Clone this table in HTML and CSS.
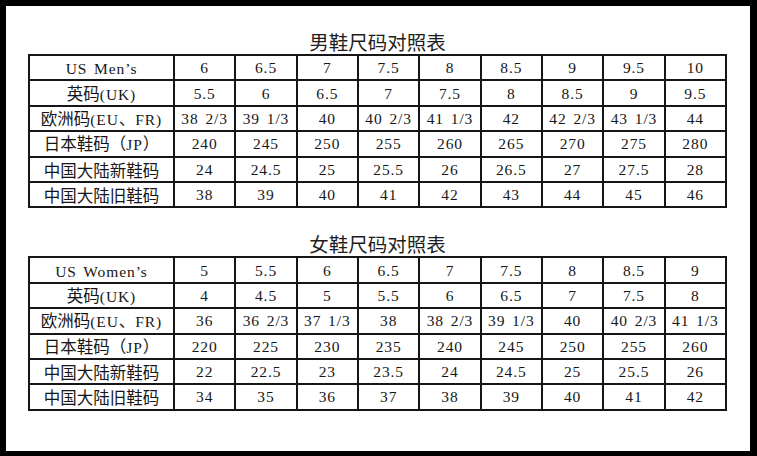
FILE: index.html
```html
<!DOCTYPE html>
<html lang="zh-CN">
<head>
<meta charset="utf-8">
<title>鞋码对照表</title>
<link rel="stylesheet" href="styles.css">
</head>
<body>
<main class="sheet">
  <section class="chart">
    <h2 class="title">男鞋尺码对照表</h2>
    <table class="sizes">
      <colgroup><col class="c-label"><col span="9"></colgroup>
      <tbody>
        <tr><th><span class="l">US Men’s</span></th><td>6</td><td>6.5</td><td>7</td><td>7.5</td><td>8</td><td>8.5</td><td>9</td><td>9.5</td><td>10</td></tr>
        <tr><th>英码<span class="l">(UK)</span></th><td>5.5</td><td>6</td><td>6.5</td><td>7</td><td>7.5</td><td>8</td><td>8.5</td><td>9</td><td>9.5</td></tr>
        <tr><th>欧洲码<span class="l">(EU</span>、<span class="l">FR)</span></th><td>38 2/3</td><td>39 1/3</td><td>40</td><td>40 2/3</td><td>41 1/3</td><td>42</td><td>42 2/3</td><td>43 1/3</td><td>44</td></tr>
        <tr><th>日本鞋码（<span class="l">JP</span>）</th><td>240</td><td>245</td><td>250</td><td>255</td><td>260</td><td>265</td><td>270</td><td>275</td><td>280</td></tr>
        <tr><th>中国大陆新鞋码</th><td>24</td><td>24.5</td><td>25</td><td>25.5</td><td>26</td><td>26.5</td><td>27</td><td>27.5</td><td>28</td></tr>
        <tr><th>中国大陆旧鞋码</th><td>38</td><td>39</td><td>40</td><td>41</td><td>42</td><td>43</td><td>44</td><td>45</td><td>46</td></tr>
      </tbody>
    </table>
  </section>
  <section class="chart women">
    <h2 class="title">女鞋尺码对照表</h2>
    <table class="sizes">
      <colgroup><col class="c-label"><col span="9"></colgroup>
      <tbody>
        <tr><th><span class="l">US Women’s</span></th><td>5</td><td>5.5</td><td>6</td><td>6.5</td><td>7</td><td>7.5</td><td>8</td><td>8.5</td><td>9</td></tr>
        <tr><th>英码<span class="l">(UK)</span></th><td>4</td><td>4.5</td><td>5</td><td>5.5</td><td>6</td><td>6.5</td><td>7</td><td>7.5</td><td>8</td></tr>
        <tr><th>欧洲码<span class="l">(EU</span>、<span class="l">FR)</span></th><td>36</td><td>36 2/3</td><td>37 1/3</td><td>38</td><td>38 2/3</td><td>39 1/3</td><td>40</td><td>40 2/3</td><td>41 1/3</td></tr>
        <tr><th>日本鞋码（<span class="l">JP</span>）</th><td>220</td><td>225</td><td>230</td><td>235</td><td>240</td><td>245</td><td>250</td><td>255</td><td>260</td></tr>
        <tr><th>中国大陆新鞋码</th><td>22</td><td>22.5</td><td>23</td><td>23.5</td><td>24</td><td>24.5</td><td>25</td><td>25.5</td><td>26</td></tr>
        <tr><th>中国大陆旧鞋码</th><td>34</td><td>35</td><td>36</td><td>37</td><td>38</td><td>39</td><td>40</td><td>41</td><td>42</td></tr>
      </tbody>
    </table>
  </section>
</main>
</body>
</html>
```
FILE: styles.css
```css
html, body {
  margin: 0;
  padding: 0;
  background: #000;
}

.sheet {
  box-sizing: border-box;
  width: 744px;
  height: 445px;
  margin: 6px 7px 5px 6px;
  padding: 26px 23px 0 22px;
  background: #fff;
  color: #161616;
}

.chart {
  width: 699px;
}

.women {
  margin-top: 26px;
}

.title {
  margin: 0 0 2px;
  font-family: "Noto Sans CJK SC", sans-serif;
  font-weight: 400;
  font-size: 19.5px;
  line-height: 20px;
  text-align: center;
  color: #1e1e1e;
}

.sizes {
  width: 699px;
  table-layout: fixed;
  border-collapse: collapse;
  font-family: "Liberation Serif", "Noto Sans CJK SC", serif;
}

.c-label {
  width: 145px;
}

.sizes tr {
  height: 25.4px;
}

.sizes th,
.sizes td {
  border: 2px solid #161616;
  padding: 1px 0 0;
  text-align: center;
  vertical-align: middle;
  white-space: nowrap;
  font-weight: 400;
  line-height: 20px;
}

.sizes th {
  font-family: "Noto Sans CJK SC", sans-serif;
  font-size: 16.5px;
}

.sizes td,
.sizes .l {
  font-family: "Liberation Serif", serif;
  font-size: 15.5px;
  letter-spacing: 0.9px;
  word-spacing: 2px;
}
```
